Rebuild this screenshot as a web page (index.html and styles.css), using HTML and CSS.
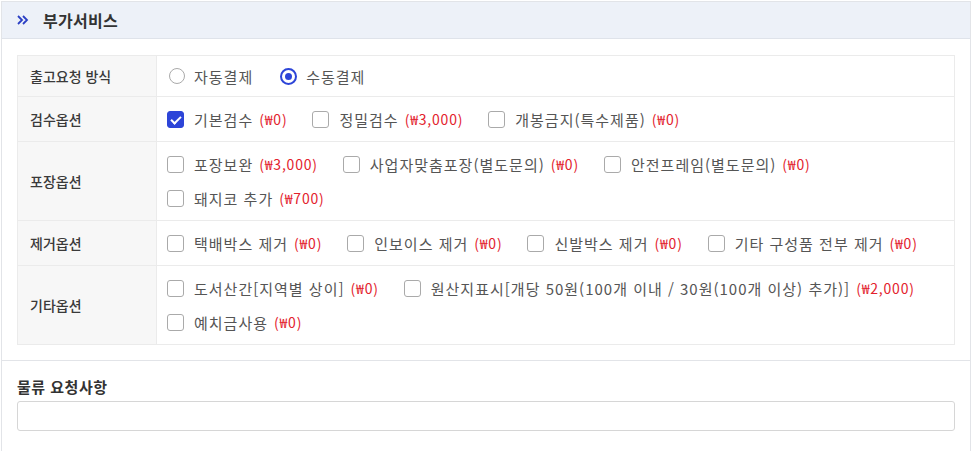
FILE: index.html
```html
<!DOCTYPE html>
<html lang="ko">
<head>
    <meta charset="UTF-8">
    <meta name="viewport" content="width=device-width, initial-scale=1.0">
    <title>부가서비스</title>
    <link rel="stylesheet" href="styles.css">
</head>
<body>
    <div class="box">
        <div class="box-head">
            <span class="chev">
                <svg width="12" height="10" viewBox="0 0 12 10"><path d="M1 1l4 4-4 4M6 1l4 4-4 4" fill="none" stroke="#2b3fc4" stroke-width="1.8"/></svg>
            </span>
            <h2>부가서비스</h2>
        </div>

        <div class="box-body">
            <table class="opt-table">
                <tr class="row-radio">
                    <th>출고요청 방식</th>
                    <td>
                        <div class="opts">
                            <label class="opt"><span class="radio"></span>자동결제</label>
                            <label class="opt"><span class="radio on"></span>수동결제</label>
                        </div>
                    </td>
                </tr>
                <tr>
                    <th>검수옵션</th>
                    <td>
                        <div class="opts">
                            <label class="opt"><span class="chk on"></span>기본검수<em>(₩0)</em></label>
                            <label class="opt"><span class="chk"></span>정밀검수<em>(₩3,000)</em></label>
                            <label class="opt"><span class="chk"></span>개봉금지(특수제품)<em>(₩0)</em></label>
                        </div>
                    </td>
                </tr>
                <tr>
                    <th>포장옵션</th>
                    <td>
                        <div class="opts">
                            <label class="opt"><span class="chk"></span>포장보완<em>(₩3,000)</em></label>
                            <label class="opt"><span class="chk"></span>사업자맞춤포장(별도문의)<em>(₩0)</em></label>
                            <label class="opt"><span class="chk"></span>안전프레임(별도문의)<em>(₩0)</em></label>
                            <label class="opt"><span class="chk"></span>돼지코 추가<em>(₩700)</em></label>
                        </div>
                    </td>
                </tr>
                <tr>
                    <th>제거옵션</th>
                    <td>
                        <div class="opts">
                            <label class="opt"><span class="chk"></span>택배박스 제거<em>(₩0)</em></label>
                            <label class="opt"><span class="chk"></span>인보이스 제거<em>(₩0)</em></label>
                            <label class="opt"><span class="chk"></span>신발박스 제거<em>(₩0)</em></label>
                            <label class="opt"><span class="chk"></span>기타 구성품 전부 제거<em>(₩0)</em></label>
                        </div>
                    </td>
                </tr>
                <tr>
                    <th>기타옵션</th>
                    <td>
                        <div class="opts">
                            <label class="opt"><span class="chk"></span>도서산간[지역별 상이]<em>(₩0)</em></label>
                            <label class="opt"><span class="chk"></span>원산지표시[개당 50원(100개 이내 / 30원(100개 이상) 추가)]<em>(₩2,000)</em></label>
                            <label class="opt"><span class="chk"></span>예치금사용<em>(₩0)</em></label>
                        </div>
                    </td>
                </tr>
            </table>
        </div>

        <div class="box-body request">
            <div class="req-title">물류 요청사항</div>
            <input type="text" class="req-input">
        </div>
    </div>
</body>
</html>
```

FILE: styles.css
```css
body {
    margin: 0;
    font-family: "Noto Sans CJK KR", "Noto Sans", sans-serif;
    color: #333;
    background: #fff;
}
.box {
    margin: 1px 0 0 1px;
    width: 970px;
    box-sizing: border-box;
    border: 1px solid #e2e4e8;
    border-bottom: none;
    height: 460px;
}
.box-head {
    height: 36px;
    background: #edf1f8;
    border-bottom: 1px solid #dfe3ea;
    display: flex;
    align-items: center;
    padding-left: 15px;
}
.chev {
    display: flex;
    width: 26px;
}
.box-head h2 {
    margin: 0;
    font-size: 16px;
    font-weight: 700;
    letter-spacing: 0.3px;
    color: #333;
}
.box-body {
    padding: 16px 15px 15px;
}
.opt-table {
    width: 100%;
    border-collapse: collapse;
    border: 1px solid #ebebeb;
}
.opt-table th {
    width: 139px;
    background: #f7f7f7;
    text-align: left;
    font-size: 14px;
    font-weight: 500;
    color: #3a3a3a;
    padding: 0 12px;
    border-top: 1px solid #ebebeb;
    border-right: 1px solid #ebebeb;
    box-sizing: border-box;
}
.opt-table td {
    padding: 10px 10px;
    border-top: 1px solid #ebebeb;
}
.row-radio td {
    padding-top: 9px;
    padding-bottom: 9px;
}
.opts {
    display: flex;
    flex-wrap: wrap;
    column-gap: 25px;
    row-gap: 10px;
}
.opt {
    display: flex;
    align-items: center;
    height: 24px;
    font-size: 15px;
    letter-spacing: 1px;
    color: #555;
    white-space: pre;
}
.row-radio .opt {
    height: 22px;
}
.opt em {
    font-style: normal;
    font-size: 14px;
    letter-spacing: 0.8px;
    margin-left: 6px;
    color: #e3222d;
}
.chk {
    width: 15px;
    height: 15px;
    border: 1.5px solid #aaa;
    border-radius: 3px;
    margin-right: 10px;
    box-sizing: content-box;
    position: relative;
}
.chk.on {
    background: #2d45d8;
    border-color: #2d45d8;
}
.chk.on::after {
    content: "";
    position: absolute;
    left: 5px;
    top: 2px;
    width: 4px;
    height: 8px;
    border: solid #fff;
    border-width: 0 2px 2px 0;
    transform: rotate(45deg);
}
.radio {
    width: 14px;
    height: 14px;
    border: 1.5px solid #aaa;
    border-radius: 50%;
    margin: 0 9px 0 2px;
    position: relative;
}
.radio.on {
    border: 2px solid #2d45d8;
    width: 13px;
    height: 13px;
}
.radio.on::after {
    content: "";
    position: absolute;
    left: 3px;
    top: 3px;
    width: 7px;
    height: 7px;
    border-radius: 50%;
    background: #2d45d8;
}
.request {
    border-top: 1px solid #e2e4e8;
    padding-top: 15px;
}
.req-title {
    font-size: 15px;
    font-weight: 700;
    letter-spacing: 0.5px;
    color: #333;
    margin-bottom: 4px;
}
.req-input {
    display: block;
    width: 100%;
    height: 30px;
    box-sizing: border-box;
    border: 1px solid #d6d6d6;
    border-radius: 3px;
}
```
